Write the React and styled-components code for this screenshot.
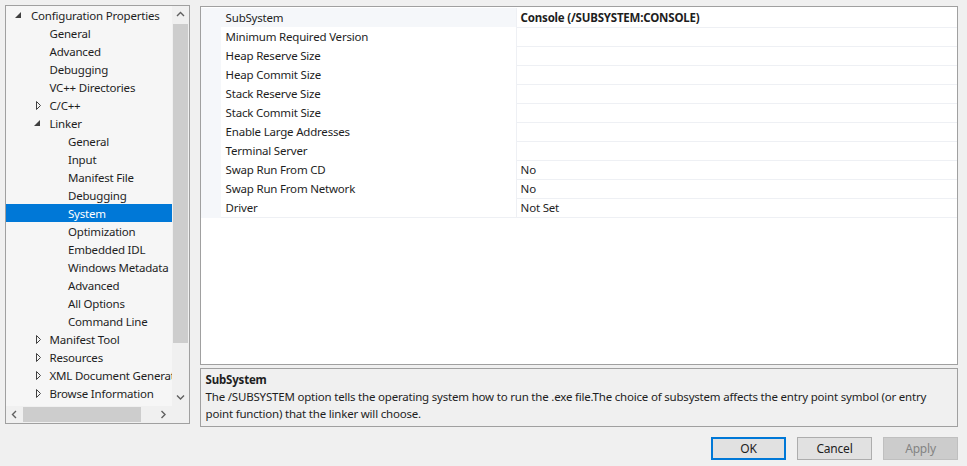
import React from "react";
import styled, { createGlobalStyle } from "styled-components";

const GlobalStyle = createGlobalStyle`
  html, body {
    margin: 0;
    padding: 0;
    background: #f0f0f0;
  }
  body {
    font-family: "Noto Sans", "Open Sans", Arial, sans-serif;
    font-size: 11.5px;
    letter-spacing: -0.2px;
    color: #1e1e1e;
  }
`;

const Dialog = styled.div`
  width: 967px;
  height: 466px;
  box-sizing: border-box;
  padding: 5px 9px 0 5px;
  display: flex;
  flex-direction: column;
  overflow: hidden;
`;

const Main = styled.div`
  display: flex;
  gap: 10px;
  align-items: flex-start;
`;

/* ---------- tree ---------- */

const TreeBox = styled.div`
  width: 185px;
  height: 419px;
  box-sizing: border-box;
  border: 1px solid #a0a0a0;
  display: grid;
  grid-template-columns: 1fr 17px;
  grid-template-rows: 1fr 17px;
  background: #f0f0f0;
`;

const TreeContent = styled.div`
  background: #f6f6f6;
  overflow: hidden;
`;

const TreeRow = styled.div`
  height: 18px;
  display: flex;
  align-items: center;
  white-space: nowrap;
  padding-left: ${(p) => 7 + p.$level * 18.5}px;
  background: ${(p) => (p.$selected ? "#0078d7" : "transparent")};
  color: ${(p) => (p.$selected ? "#fff" : "#1e1e1e")};
`;

const Expander = styled.span`
  width: 18px;
  flex: none;
  display: flex;
  align-items: center;
  padding-left: ${(p) => (p.$open ? 2 : 4)}px;
  box-sizing: border-box;
`;

const VScroll = styled.div`
  display: flex;
  flex-direction: column;
  background: #f0f0f0;
`;

const HScroll = styled.div`
  display: flex;
  align-items: center;
  background: #f0f0f0;
`;

const ArrowBtn = styled.div`
  width: 17px;
  height: 17px;
  flex: none;
  display: flex;
  align-items: center;
  justify-content: center;
`;

const VThumb = styled.div`
  margin: 1px 1px 0 1px;
  height: 319px;
  background: #cdcdcd;
`;

const HThumb = styled.div`
  margin: 1px 0;
  width: 118px;
  height: 15px;
  background: #cdcdcd;
`;

const Spacer = styled.div`
  flex: 1;
`;

const Corner = styled.div`
  background: #f0f0f0;
`;

/* ---------- properties ---------- */

const RightCol = styled.div`
  width: 760px;
  margin-top: 1px;
  display: flex;
  flex-direction: column;
  gap: 3px;
`;

const Grid = styled.div`
  height: 359px;
  box-sizing: border-box;
  border: 1px solid #a0a0a0;
  background: #fff;
  padding-top: 1px;
`;

const PropRow = styled.div`
  display: grid;
  grid-template-columns: 20px 296px 1fr;
  height: 19px;
`;

const Gutter = styled.div`
  background: #f5f7fa;
`;

const NameCell = styled.div`
  box-sizing: border-box;
  padding-left: 5px;
  line-height: 19px;
  border-bottom: 1px solid #eef0f4;
  border-right: 1px solid #eef0f4;
  background: ${(p) => (p.$active ? "#f5f7fa" : "#fff")};
  white-space: nowrap;
`;

const ValueCell = styled.div`
  box-sizing: border-box;
  padding-left: 4px;
  line-height: 19px;
  border-bottom: 1px solid #eef0f4;
  font-weight: ${(p) => (p.$bold ? 700 : 400)};
  white-space: nowrap;
`;

const Description = styled.div`
  height: 59px;
  box-sizing: border-box;
  border: 1px solid #a0a0a0;
  background: #f0f0f0;
  padding: 2px 5px 0 5px;
  line-height: 17px;
`;

const DescTitle = styled.div`
  font-weight: 700;
`;

const DescText = styled.div``;

/* ---------- footer ---------- */

const Footer = styled.div`
  display: flex;
  justify-content: flex-end;
  gap: 11px;
  padding-top: 10px;
`;

const Button = styled.button`
  width: 75px;
  height: 23px;
  box-sizing: border-box;
  font-family: inherit;
  font-size: 12px;
  letter-spacing: inherit;
  padding: 0;
  background: ${(p) => (p.disabled ? "#cccccc" : "#e1e1e1")};
  color: ${(p) => (p.disabled ? "#838383" : "#1e1e1e")};
  border: ${(p) =>
    p.$default ? "2px solid #0078d7" : p.disabled ? "1px solid #bfbfbf" : "1px solid #adadad"};
`;

const OpenArrow = () => (
  <svg width="6" height="6" viewBox="0 0 6 6">
    <polygon points="6,0 6,6 0,6" fill="#404040" />
  </svg>
);

const ClosedArrow = () => (
  <svg width="6" height="9" viewBox="0 0 6 9">
    <polygon points="0.5,0.5 4.5,4.5 0.5,8.5" fill="none" stroke="#404040" strokeWidth="1" />
  </svg>
);

const Chevron = ({ dir }) => {
  const paths = {
    up: "M1 5 L4.5 1.5 L8 5",
    down: "M1 1.5 L4.5 5 L8 1.5",
    left: "M5 1 L1.5 4.5 L5 8",
    right: "M1.5 1 L5 4.5 L1.5 8",
  };
  const horiz = dir === "left" || dir === "right";
  return (
    <svg width={horiz ? 7 : 9} height={horiz ? 9 : 7} viewBox={horiz ? "0 0 7 9" : "0 0 9 7"}>
      <path d={paths[dir]} fill="none" stroke="#606060" strokeWidth="1.4" />
    </svg>
  );
};

const tree = [
  { label: "Configuration Properties", level: 0, exp: "open" },
  { label: "General", level: 1 },
  { label: "Advanced", level: 1 },
  { label: "Debugging", level: 1 },
  { label: "VC++ Directories", level: 1 },
  { label: "C/C++", level: 1, exp: "closed" },
  { label: "Linker", level: 1, exp: "open" },
  { label: "General", level: 2 },
  { label: "Input", level: 2 },
  { label: "Manifest File", level: 2 },
  { label: "Debugging", level: 2 },
  { label: "System", level: 2, selected: true },
  { label: "Optimization", level: 2 },
  { label: "Embedded IDL", level: 2 },
  { label: "Windows Metadata", level: 2 },
  { label: "Advanced", level: 2 },
  { label: "All Options", level: 2 },
  { label: "Command Line", level: 2 },
  { label: "Manifest Tool", level: 1, exp: "closed" },
  { label: "Resources", level: 1, exp: "closed" },
  { label: "XML Document Generator", level: 1, exp: "closed" },
  { label: "Browse Information", level: 1, exp: "closed" },
];

const props = [
  { name: "SubSystem", value: "Console (/SUBSYSTEM:CONSOLE)", bold: true, active: true },
  { name: "Minimum Required Version", value: "" },
  { name: "Heap Reserve Size", value: "" },
  { name: "Heap Commit Size", value: "" },
  { name: "Stack Reserve Size", value: "" },
  { name: "Stack Commit Size", value: "" },
  { name: "Enable Large Addresses", value: "" },
  { name: "Terminal Server", value: "" },
  { name: "Swap Run From CD", value: "No" },
  { name: "Swap Run From Network", value: "No" },
  { name: "Driver", value: "Not Set" },
];

export default function App() {
  return (
    <>
      <GlobalStyle />
      <Dialog>
        <Main>
          <TreeBox>
            <TreeContent>
              {tree.map((t, i) => (
                <TreeRow key={i} $level={t.level} $selected={t.selected}>
                  <Expander $open={t.exp === "open"}>
                    {t.exp === "open" && <OpenArrow />}
                    {t.exp === "closed" && <ClosedArrow />}
                  </Expander>
                  {t.label}
                </TreeRow>
              ))}
            </TreeContent>
            <VScroll>
              <ArrowBtn>
                <Chevron dir="up" />
              </ArrowBtn>
              <VThumb />
              <Spacer />
              <ArrowBtn>
                <Chevron dir="down" />
              </ArrowBtn>
            </VScroll>
            <HScroll>
              <ArrowBtn>
                <Chevron dir="left" />
              </ArrowBtn>
              <HThumb />
              <Spacer />
              <ArrowBtn>
                <Chevron dir="right" />
              </ArrowBtn>
            </HScroll>
            <Corner />
          </TreeBox>
          <RightCol>
            <Grid>
              {props.map((p, i) => (
                <PropRow key={i}>
                  <Gutter />
                  <NameCell $active={p.active}>{p.name}</NameCell>
                  <ValueCell $bold={p.bold}>{p.value}</ValueCell>
                </PropRow>
              ))}
            </Grid>
            <Description>
              <DescTitle>SubSystem</DescTitle>
              <DescText>
                The /SUBSYSTEM option tells the operating system how to run the .exe file.The choice of
                subsystem affects the entry point symbol (or entry point function) that the linker will
                choose.
              </DescText>
            </Description>
          </RightCol>
        </Main>
        <Footer>
          <Button $default>OK</Button>
          <Button>Cancel</Button>
          <Button disabled>Apply</Button>
        </Footer>
      </Dialog>
    </>
  );
}
